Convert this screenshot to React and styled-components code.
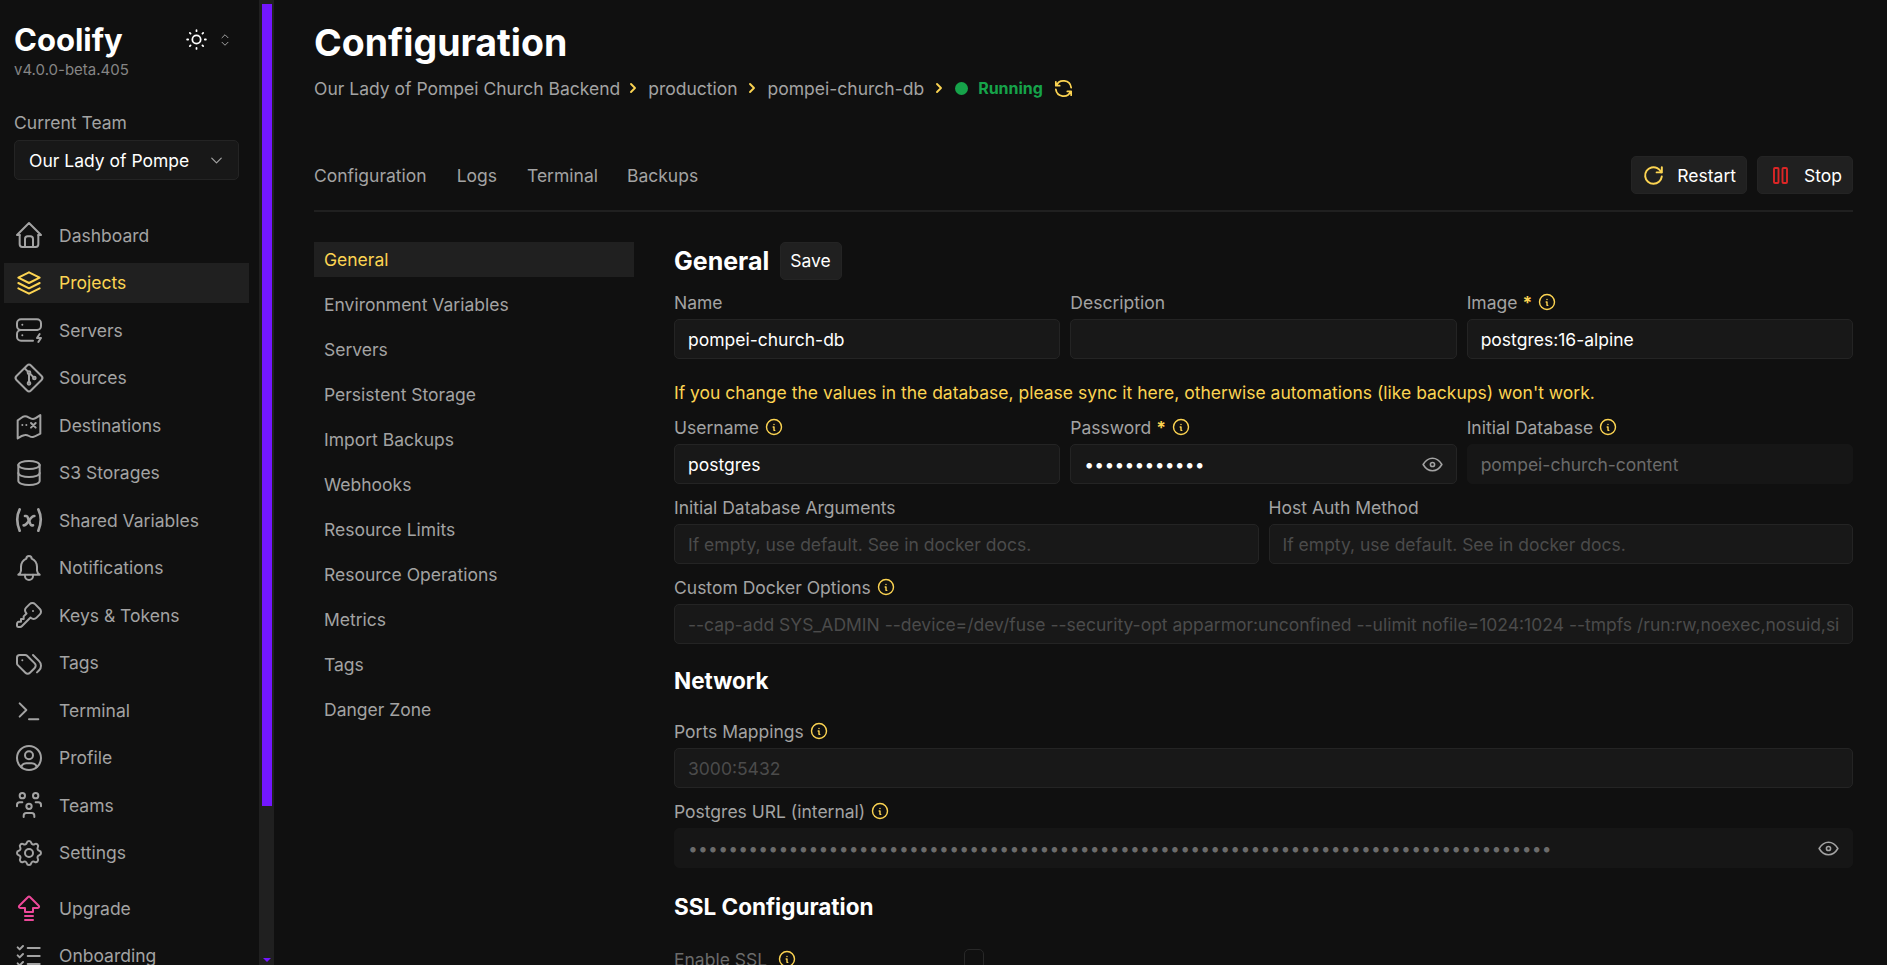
import React from "react";
import styled, { createGlobalStyle } from "styled-components";
import {
  TbHome, TbStack2, TbServerBolt, TbBrandGit, TbDatabase, TbVariable, TbBell, TbKey, TbTags,
  TbTerminal, TbUserCircle, TbUsersGroup, TbSettings, TbArrowBigUpLines, TbListCheck, TbSun,
  TbSelector, TbChevronDown, TbChevronRight, TbRefresh, TbReload, TbInfoCircle, TbEye,
} from "react-icons/tb";

const GlobalStyle = createGlobalStyle`
  html, body { margin: 0; height: 100%; background: #101010; overflow: hidden; }
  * { box-sizing: border-box; }
  body { font-family: Inter, "Liberation Sans", sans-serif; font-size: 17.5px; color: #a3a3a3; }
`;

const Page = styled.div`
  display: flex;
  height: 965px;
  overflow: hidden;
`;
const Sidebar = styled.aside`
  width: 259px;
  flex: none;
  padding: 0 10px 0 4px;
`;
const BrandRow = styled.div`
  display: flex;
  align-items: center;
  padding: 22px 0 0 10px;
  height: 58px;
`;
const Brand = styled.div`
  font-size: 31px;
  font-weight: 700;
  color: #fff;
  line-height: 36px;
  width: 170px;
`;
const ThemeToggle = styled.div`
  display: flex;
  align-items: center;
  gap: 7px;
  color: #fff;
  margin-top: -1px;
`;
const Version = styled.div`
  padding-left: 10px;
  font-size: 15px;
  line-height: 20px;
  margin-top: 2px;
  color: #858585;
`;
const TeamLabel = styled.div`
  padding-left: 10px;
  margin-top: 32px;
  line-height: 22px;
`;
const TeamSelect = styled.div`
  margin: 6px 0 0 10px;
  width: 225px;
  height: 40px;
  display: flex;
  align-items: center;
  justify-content: space-between;
  padding: 0 12px 0 14px;
  background: #181818;
  border: 1px solid #242424;
  border-radius: 5px;
  color: #fff;
  span {
    width: 160px;
    overflow: hidden;
    white-space: nowrap;
  }
`;
const Nav = styled.nav`
  margin-top: 35px;
  display: flex;
  flex-direction: column;
  gap: 7.5px;
`;
const NavItem = styled.div`
  display: flex;
  align-items: center;
  gap: 14px;
  height: 40px;
  padding-left: 9px;
  margin-top: ${(p) => (p.$gapAbove ? "8px" : "0")};
  flex: none;
  color: ${(p) => (p.$active ? "#fcd452" : "#a3a3a3")};
  background: ${(p) => (p.$active ? "#202020" : "transparent")};
`;
const Track = styled.div`
  width: 15px;
  flex: none;
  height: 100%;
  background: #202020;
  padding: 4px 2px 0 3px;
  display: flex;
  flex-direction: column;
`;
const Thumb = styled.div`
  height: 802px;
  flex: none;
  background: #7317ff;
`;
const TrackArrow = styled.div`
  margin: auto auto 3px;
  width: 0;
  height: 0;
  border-left: 4px solid transparent;
  border-right: 4px solid transparent;
  border-top: 4px solid #7317ff;
`;
const Main = styled.main`
  flex: 1;
  min-width: 0;
  padding: 0 34px 0 40px;
`;
const Title = styled.h1`
  margin: 0;
  padding-top: 22px;
  font-size: 37.5px;
  line-height: 42px;
  font-weight: 700;
  color: #fff;
`;
const Breadcrumbs = styled.div`
  display: flex;
  align-items: center;
  height: 22px;
  margin-top: 13px;
  white-space: nowrap;
`;
const Crumb = styled.span`
  margin-right: ${(p) => p.$gap}px;
`;
const Sep = styled.span`
  display: flex;
  color: #fcd452;
  margin-right: 7.5px;
`;
const StatusDot = styled.span`
  width: 13px;
  height: 13px;
  border-radius: 50%;
  background: #16a34a;
  margin: 0 10px 0 1px;
`;
const StatusText = styled.span`
  font-size: 16px;
  font-weight: 700;
  color: #16a34a;
  margin-right: 9px;
`;
const YellowIcon = styled.span`
  display: flex;
  color: #fcd452;
`;
const TabBar = styled.div`
  margin-top: 58px;
  height: 55px;
  padding-bottom: 17px;
  display: flex;
  align-items: center;
  justify-content: space-between;
  border-bottom: 2px solid #202020;
`;
const Tabs = styled.div`
  display: flex;
  gap: 30px;
  span:last-child {
    margin-left: -1px;
  }
`;
const Actions = styled.div`
  display: flex;
  gap: 10px;
`;
const Button = styled.button`
  font: inherit;
  color: #fff;
  height: 37.5px;
  display: flex;
  align-items: center;
  gap: 11px;
  padding: 0 10px 0 ${(p) => p.$padLeft}px;
  background: #202020;
  border: 1px solid #242424;
  border-radius: 5px;
`;
const Body = styled.div`
  display: flex;
  gap: 42px;
  margin-top: 30px;
`;
const SideMenu = styled.div`
  width: 320px;
  flex: none;
  display: flex;
  flex-direction: column;
  gap: 10px;
`;
const SideItem = styled.div`
  height: 35px;
  line-height: 35px;
  padding-left: 10px;
  color: ${(p) => (p.$active ? "#fcd452" : "#a3a3a3")};
  background: ${(p) => (p.$active ? "#202020" : "transparent")};
`;
const Form = styled.div`
  flex: 1;
  min-width: 0;
  margin-left: -2px;
`;
const FormHeader = styled.div`
  display: flex;
  align-items: center;
  gap: 11px;
  height: 37.5px;
  margin-bottom: 11.5px;
`;
const H2 = styled.h2`
  margin: 0;
  font-size: 25px;
  font-weight: 700;
  color: #fff;
`;
const H3 = styled.h3`
  margin: ${(p) => p.$top}px 0 ${(p) => p.$bottom}px;
  font-size: 22.5px;
  line-height: 30px;
  font-weight: 700;
  color: #fff;
`;
const Row = styled.div`
  display: grid;
  grid-template-columns: repeat(${(p) => p.$cols}, minmax(0, 1fr));
  gap: 10px;
  margin-bottom: 12px;
`;
const Warning = styled.div`
  color: #fcd452;
  line-height: 22px;
  margin: 22.5px 0 12.5px;
`;
const Field = styled.div`
  display: flex;
  flex-direction: column;
  gap: 6px;
  min-width: 0;
`;
const Label = styled.label`
  display: flex;
  align-items: center;
  gap: 5px;
  height: 22px;
  color: #a3a3a3;
  b {
    color: #fcd452;
    font-weight: 700;
  }
`;
const InputWrap = styled.div`
  position: relative;
  height: 40px;
`;
const Input = styled.input`
  display: block;
  width: 100%;
  height: 100%;
  font: inherit;
  padding: 0 13px;
  color: #fff;
  background: #181818;
  border: 1px solid #242424;
  border-radius: 5px;
  outline: none;
  letter-spacing: ${(p) => (p.type === "password" ? "0.2px" : "normal")};
  &::placeholder {
    color: #4b4b4b;
    opacity: 1;
  }
  &:disabled {
    color: #6b6b6b;
    background: #161616;
    border-color: #161616;
    -webkit-text-fill-color: #6b6b6b;
  }
`;
const EyeIcon = styled.span`
  position: absolute;
  right: 12px;
  top: 8px;
  display: flex;
  color: #a3a3a3;
`;
const CheckRow = styled.div`
  display: flex;
  align-items: center;
  height: 22px;
  color: #6b6b6b;
`;
const CheckLabel = styled.span`
  display: flex;
  align-items: center;
  gap: 10px;
  width: 290px;
`;
const Checkbox = styled.span`
  width: 20px;
  height: 20px;
  background: transparent;
  border: 1px solid #282828;
  border-radius: 5px;
`;

const Info = () => (
  <YellowIcon>
    <TbInfoCircle size={20} strokeWidth={1.7} />
  </YellowIcon>
);

const MapX = ({ size, strokeWidth }) => (
  <svg width={size} height={size} viewBox="0 0 24 24" fill="none" stroke="currentColor" strokeWidth={strokeWidth} strokeLinecap="round" strokeLinejoin="round">
    <path d="M3.500 8.500c2-1 3.500-3 5.500-3c2.500 0 3.500 2 6 2c1.500 0 4-2 5.500-3v14c-2 1-3.500 2-5.500 2.500c-2.500 .5-3.500-2-6-1.500c-2 .3-4 1.500-5.500 2.500z" />
    <path d="M7 12h.01M10 12h.01" />
    <path d="M13.500 10.500l3.500 3.500M17 10.500l-3.500 3.500" />
  </svg>
);

const StopIcon = () => (
  <svg width="25" height="25" viewBox="0 0 25 25" fill="none" stroke="#dc2626" strokeWidth="1.9" strokeLinejoin="round">
    <rect x="6" y="5" width="4.500" height="15" rx="1" />
    <rect x="14.500" y="5" width="4.500" height="15" rx="1" />
  </svg>
);

const navItems = [
  ["Dashboard", TbHome],
  ["Projects", TbStack2, true],
  ["Servers", TbServerBolt],
  ["Sources", TbBrandGit],
  ["Destinations", MapX],
  ["S3 Storages", TbDatabase],
  ["Shared Variables", TbVariable, false, 2],
  ["Notifications", TbBell],
  ["Keys & Tokens", TbKey],
  ["Tags", TbTags],
  ["Terminal", TbTerminal],
  ["Profile", TbUserCircle],
  ["Teams", TbUsersGroup],
  ["Settings", TbSettings],
];

const menu = ["General", "Environment Variables", "Servers", "Persistent Storage", "Import Backups", "Webhooks", "Resource Limits", "Resource Operations", "Metrics", "Tags", "Danger Zone"];

export default function App() {
  return (
    <Page>
      <GlobalStyle />
      <Sidebar>
        <BrandRow>
          <Brand>Coolify</Brand>
          <ThemeToggle>
            <TbSun size={25} strokeWidth={1.7} />
            <TbSelector size={18} strokeWidth={1.3} color="#a3a3a3" />
          </ThemeToggle>
        </BrandRow>
        <Version>v4.0.0-beta.405</Version>
        <TeamLabel>Current Team</TeamLabel>
        <TeamSelect>
          <span>Our Lady of Pompei Church</span>
          <TbChevronDown size={19} strokeWidth={1.5} color="#a3a3a3" />
        </TeamSelect>
        <Nav>
          {navItems.map(([name, Icon, active, sw]) => (
            <NavItem key={name} $active={active}>
              <Icon size={32} strokeWidth={sw || 1.5} />
              {name}
            </NavItem>
          ))}
          <NavItem $gapAbove>
            <TbArrowBigUpLines size={32} strokeWidth={1.5} color="#ec4899" />
            Upgrade
          </NavItem>
          <NavItem>
            <TbListCheck size={32} strokeWidth={1.5} />
            Onboarding
          </NavItem>
        </Nav>
      </Sidebar>
      <Track>
        <Thumb />
        <TrackArrow />
      </Track>
      <Main>
        <Title>Configuration</Title>
        <Breadcrumbs>
          <Crumb $gap={4.5}>Our Lady of Pompei Church Backend</Crumb>
          <Sep><TbChevronRight size={16} strokeWidth={2.8} /></Sep>
          <Crumb $gap={6.5}>production</Crumb>
          <Sep><TbChevronRight size={16} strokeWidth={2.8} /></Sep>
          <Crumb $gap={6.5}>pompei-church-db</Crumb>
          <Sep><TbChevronRight size={16} strokeWidth={2.8} /></Sep>
          <StatusDot />
          <StatusText>Running</StatusText>
          <YellowIcon><TbRefresh size={23} strokeWidth={1.8} /></YellowIcon>
        </Breadcrumbs>
        <TabBar>
          <Tabs>
            <span>Configuration</span>
            <span>Logs</span>
            <span>Terminal</span>
            <span>Backups</span>
          </Tabs>
          <Actions>
            <Button $padLeft={9}>
              <YellowIcon><TbReload size={25} strokeWidth={1.9} /></YellowIcon>
              Restart
            </Button>
            <Button $padLeft={10}>
              <StopIcon />
              Stop
            </Button>
          </Actions>
        </TabBar>
        <Body>
          <SideMenu>
            {menu.map((m, i) => (
              <SideItem key={m} $active={i === 0}>{m}</SideItem>
            ))}
          </SideMenu>
          <Form>
            <FormHeader>
              <H2>General</H2>
              <Button $padLeft={9}>Save</Button>
            </FormHeader>
            <Row $cols={3}>
              <Field>
                <Label>Name</Label>
                <InputWrap><Input readOnly value="pompei-church-db" /></InputWrap>
              </Field>
              <Field>
                <Label>Description</Label>
                <InputWrap><Input readOnly value="" /></InputWrap>
              </Field>
              <Field>
                <Label>Image <b>*</b> <Info /></Label>
                <InputWrap><Input readOnly value="postgres:16-alpine" /></InputWrap>
              </Field>
            </Row>
            <Warning>If you change the values in the database, please sync it here, otherwise automations (like backups) won't work.</Warning>
            <Row $cols={3}>
              <Field>
                <Label>Username <Info /></Label>
                <InputWrap><Input readOnly value="postgres" /></InputWrap>
              </Field>
              <Field>
                <Label>Password <b>*</b> <Info /></Label>
                <InputWrap>
                  <Input readOnly type="password" value="abcdefghijkl" />
                  <EyeIcon><TbEye size={25} strokeWidth={1.5} /></EyeIcon>
                </InputWrap>
              </Field>
              <Field>
                <Label>Initial Database <Info /></Label>
                <InputWrap><Input disabled value="pompei-church-content" /></InputWrap>
              </Field>
            </Row>
            <Row $cols={2}>
              <Field>
                <Label>Initial Database Arguments</Label>
                <InputWrap><Input readOnly placeholder="If empty, use default. See in docker docs." /></InputWrap>
              </Field>
              <Field>
                <Label>Host Auth Method</Label>
                <InputWrap><Input readOnly placeholder="If empty, use default. See in docker docs." /></InputWrap>
              </Field>
            </Row>
            <Row $cols={1}>
              <Field>
                <Label>Custom Docker Options <Info /></Label>
                <InputWrap><Input readOnly placeholder="--cap-add SYS_ADMIN --device=/dev/fuse --security-opt apparmor:unconfined --ulimit nofile=1024:1024 --tmpfs /run:rw,noexec,nosuid,size=65536k" /></InputWrap>
              </Field>
            </Row>
            <H3 $top={22} $bottom={24}>Network</H3>
            <Row $cols={1}>
              <Field>
                <Label>Ports Mappings <Info /></Label>
                <InputWrap><Input readOnly placeholder="3000:5432" /></InputWrap>
              </Field>
            </Row>
            <Row $cols={1}>
              <Field>
                <Label>Postgres URL (internal) <Info /></Label>
                <InputWrap>
                  <Input disabled type="password" value={"x".repeat(86)} />
                  <EyeIcon><TbEye size={25} strokeWidth={1.5} /></EyeIcon>
                </InputWrap>
              </Field>
            </Row>
            <H3 $top={24} $bottom={26}>SSL Configuration</H3>
            <CheckRow>
              <CheckLabel>Enable SSL <Info /></CheckLabel>
              <Checkbox />
            </CheckRow>
          </Form>
        </Body>
      </Main>
    </Page>
  );
}
